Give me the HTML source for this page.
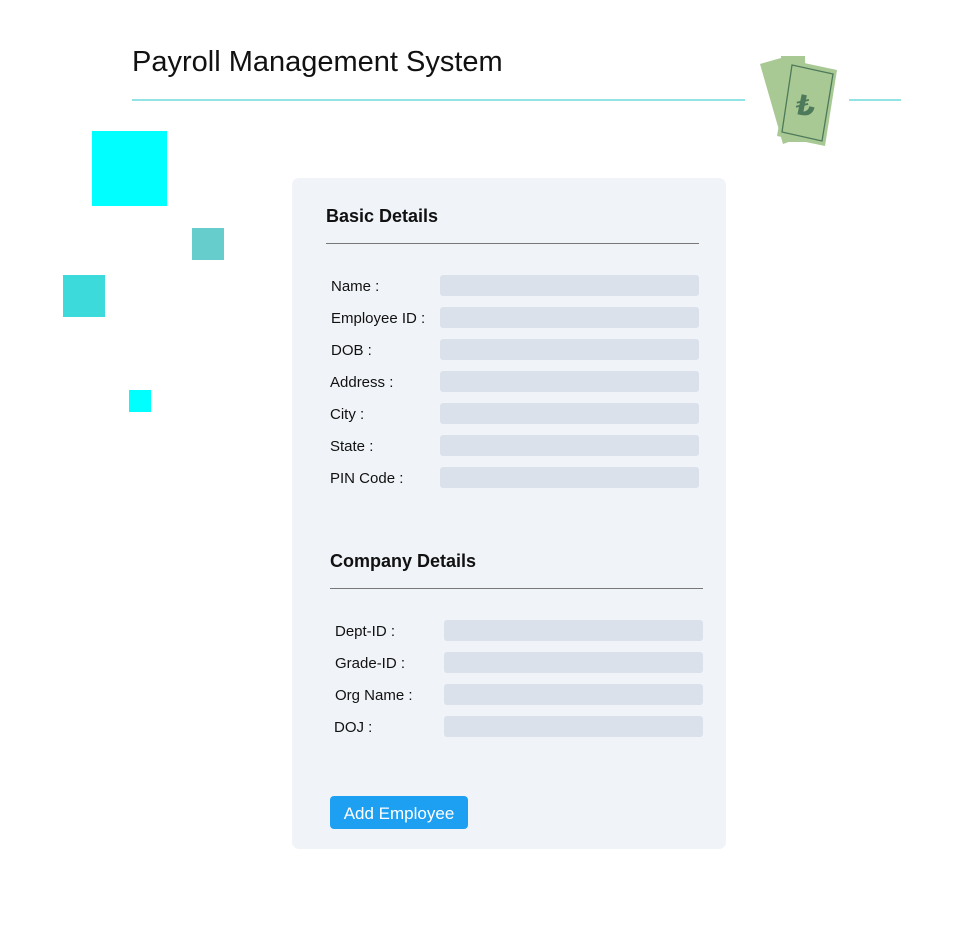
<!DOCTYPE html>
<html><head><style>
body{margin:0;width:980px;height:931px;background:#fff;position:relative;font-family:"Liberation Sans",sans-serif;overflow:hidden}
.a{position:absolute;white-space:nowrap}
.lbl{position:absolute;font-size:15px;color:#111;line-height:21px;white-space:nowrap}
.in{position:absolute;height:21px;background:#dae1ea;border-radius:3px}
</style></head><body>
<div class="a" style="left:132px;top:46px;font-size:29px;color:#111">Payroll Management System</div>
<div class="a" style="left:132px;top:99px;width:613px;height:2px;background:#92e3e3"></div>
<div class="a" style="left:849px;top:99px;width:52px;height:2px;background:#92e3e3"></div>
<svg class="a" style="left:755px;top:50px" width="90" height="100" viewBox="0 0 90 100">
<g fill="#a9c994">
<polygon points="5,14 26,8 50,86 28,94"/>
<polygon points="26,6 50,6 52,92 28,92"/>
<polygon points="35,10 82,20 70,96 22,86"/>
</g>
<polygon points="37,15 78,24 67,91 27,82" fill="none" stroke="#4d7a5a" stroke-width="1.3"/>
<text x="41" y="66" font-size="28" font-weight="bold" fill="#4d7a5a" transform="rotate(12 52 55)" font-family="DejaVu Sans,sans-serif">₺</text>
</svg>
<div class="a" style="left:92px;top:131px;width:75px;height:75px;background:#00ffff"></div>
<div class="a" style="left:192px;top:228px;width:32px;height:32px;background:#66cccc"></div>
<div class="a" style="left:63px;top:275px;width:42px;height:42px;background:#3ddadc"></div>
<div class="a" style="left:129px;top:390px;width:22px;height:22px;background:#00ffff"></div>

<div class="a" style="left:292px;top:178px;width:434px;height:671px;background:#f0f4f8;border-radius:7px"></div>
<div class="a" style="left:326px;top:206px;font-size:18px;font-weight:bold;color:#111">Basic Details</div>
<div class="a" style="left:326px;top:243px;width:373px;height:1px;background:#777"></div>
<div class="lbl" style="left:331px;top:276px">Name :</div><div class="in" style="left:440px;top:275px;width:259px"></div>
<div class="lbl" style="left:331px;top:308px">Employee ID :</div><div class="in" style="left:440px;top:307px;width:259px"></div>
<div class="lbl" style="left:331px;top:340px">DOB :</div><div class="in" style="left:440px;top:339px;width:259px"></div>
<div class="lbl" style="left:330px;top:372px">Address :</div><div class="in" style="left:440px;top:371px;width:259px"></div>
<div class="lbl" style="left:330px;top:404px">City :</div><div class="in" style="left:440px;top:403px;width:259px"></div>
<div class="lbl" style="left:330px;top:436px">State :</div><div class="in" style="left:440px;top:435px;width:259px"></div>
<div class="lbl" style="left:330px;top:468px">PIN Code :</div><div class="in" style="left:440px;top:467px;width:259px"></div>

<div class="a" style="left:330px;top:551px;font-size:18px;font-weight:bold;color:#111">Company Details</div>
<div class="a" style="left:330px;top:588px;width:373px;height:1px;background:#777"></div>
<div class="lbl" style="left:335px;top:621px">Dept-ID :</div><div class="in" style="left:444px;top:620px;width:259px"></div>
<div class="lbl" style="left:335px;top:653px">Grade-ID :</div><div class="in" style="left:444px;top:652px;width:259px"></div>
<div class="lbl" style="left:335px;top:685px">Org Name :</div><div class="in" style="left:444px;top:684px;width:259px"></div>
<div class="lbl" style="left:334px;top:717px">DOJ :</div><div class="in" style="left:444px;top:716px;width:259px"></div>

<div class="a" style="left:330px;top:796px;width:138px;height:33px;background:#1d9ff2;border-radius:4px;color:#fff;font-size:17px;line-height:35px;text-align:center">Add Employee</div>
</body></html>
